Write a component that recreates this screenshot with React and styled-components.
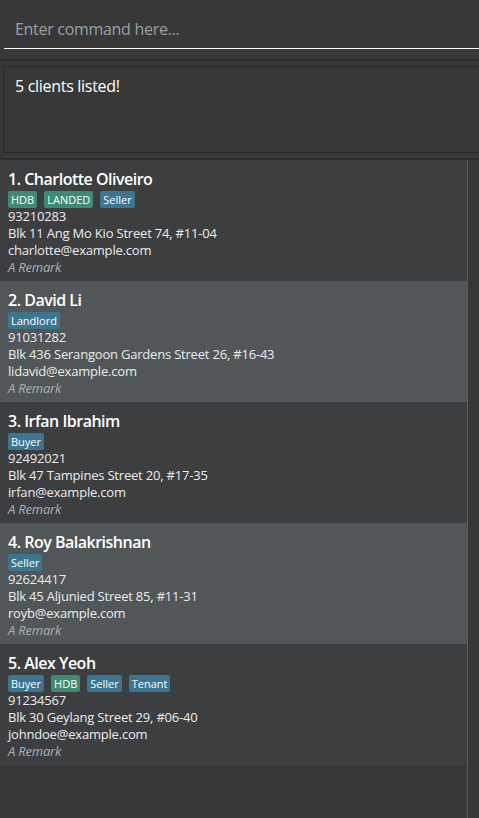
import React from "react";
import styled, { createGlobalStyle } from "styled-components";

const Global = createGlobalStyle`
  html, body { margin: 0; padding: 0; background: #383838; }
  * { box-sizing: border-box; }
`;

const FONT = `"Open Sans", "Noto Sans", sans-serif`;

const Page = styled.div`
  width: 479px;
  height: 818px;
  background: #383838;
  display: flex;
  flex-direction: column;
  overflow: hidden;
  font-family: ${FONT};
`;

const CommandBar = styled.div`
  height: 59px;
  padding: 10px 0 0 4px;
`;

const CommandInput = styled.input`
  display: block;
  width: 100%;
  height: 39px;
  background: transparent;
  border: none;
  border-bottom: 1px solid #ffffff;
  outline: none;
  padding: 0 0 0 11px;
  font-family: ${FONT};
  font-size: 16px;
  letter-spacing: -0.3px;
  color: #ffffff;
  &::placeholder { color: #9aa0a6; }
`;

const Divider = styled.div`
  height: 2px;
  background: #2c2c2c;
  flex-shrink: 0;
`;

const ResultPane = styled.div`
  height: 97px;
  padding: 5px 0 5px 3px;
  flex-shrink: 0;
`;

const ResultBox = styled.div`
  height: 100%;
  margin-right: -4px;
  border: 1px solid #2a2a2a;
  padding: 8px 11px;
  color: #ffffff;
  font-size: 16px;
  letter-spacing: -0.3px;
`;

const ListArea = styled.div`
  flex: 1;
  display: flex;
  align-items: stretch;
`;

const List = styled.div`
  width: 467px;
  display: flex;
  flex-direction: column;
`;

const ScrollTrack = styled.div`
  width: 12px;
  border-left: 1px solid #5a5a5a;
  background: #363636;
`;

const Cell = styled.div`
  height: 121px;
  padding: 8px 8px 5px 8px;
  background: ${(p) => (p.$alt ? "#515658" : "#3c3e40")};
  display: flex;
  flex-direction: column;
`;

const Name = styled.div`
  height: 22px;
  line-height: 22px;
  font-size: 16px;
  font-weight: 600;
  letter-spacing: -0.5px;
  color: #ffffff;
`;

const Tags = styled.div`
  display: flex;
  gap: 7px;
  margin-top: 1px;
  height: 17px;
`;

const Tag = styled.span`
  height: 17px;
  line-height: 17px;
  padding: 0 3px;
  border-radius: 2px;
  font-size: 11px;
  color: #ffffff;
  background: ${(p) => (p.$kind === "prop" ? "#3e8a74" : "#3b7590")};
`;

const Detail = styled.div`
  height: 17px;
  line-height: 17px;
  font-size: 13px;
  letter-spacing: -0.2px;
  color: #ececec;
`;

const Remark = styled(Detail)`
  font-style: italic;
  color: #aab1b6;
`;

const propTags = new Set(["HDB", "LANDED", "CONDO"]);

const clients = [
  {
    name: "Charlotte Oliveiro",
    tags: ["HDB", "LANDED", "Seller"],
    phone: "93210283",
    address: "Blk 11 Ang Mo Kio Street 74, #11-04",
    email: "charlotte@example.com",
  },
  {
    name: "David Li",
    tags: ["Landlord"],
    phone: "91031282",
    address: "Blk 436 Serangoon Gardens Street 26, #16-43",
    email: "lidavid@example.com",
  },
  {
    name: "Irfan Ibrahim",
    tags: ["Buyer"],
    phone: "92492021",
    address: "Blk 47 Tampines Street 20, #17-35",
    email: "irfan@example.com",
  },
  {
    name: "Roy Balakrishnan",
    tags: ["Seller"],
    phone: "92624417",
    address: "Blk 45 Aljunied Street 85, #11-31",
    email: "royb@example.com",
  },
  {
    name: "Alex Yeoh",
    tags: ["Buyer", "HDB", "Seller", "Tenant"],
    phone: "91234567",
    address: "Blk 30 Geylang Street 29, #06-40",
    email: "johndoe@example.com",
  },
];

export default function App() {
  return (
    <>
      <Global />
      <Page>
        <CommandBar>
          <CommandInput placeholder="Enter command here..." />
        </CommandBar>
        <Divider />
        <ResultPane>
          <ResultBox>5 clients listed!</ResultBox>
        </ResultPane>
        <Divider />
        <ListArea>
          <List>
            {clients.map((c, i) => (
              <Cell key={c.name} $alt={i % 2 === 1}>
                <Name>
                  {i + 1}. {c.name}
                </Name>
                <Tags>
                  {c.tags.map((t) => (
                    <Tag key={t} $kind={propTags.has(t) ? "prop" : "role"}>
                      {t}
                    </Tag>
                  ))}
                </Tags>
                <Detail>{c.phone}</Detail>
                <Detail>{c.address}</Detail>
                <Detail>{c.email}</Detail>
                <Remark>A Remark</Remark>
              </Cell>
            ))}
          </List>
          <ScrollTrack />
        </ListArea>
      </Page>
    </>
  );
}
